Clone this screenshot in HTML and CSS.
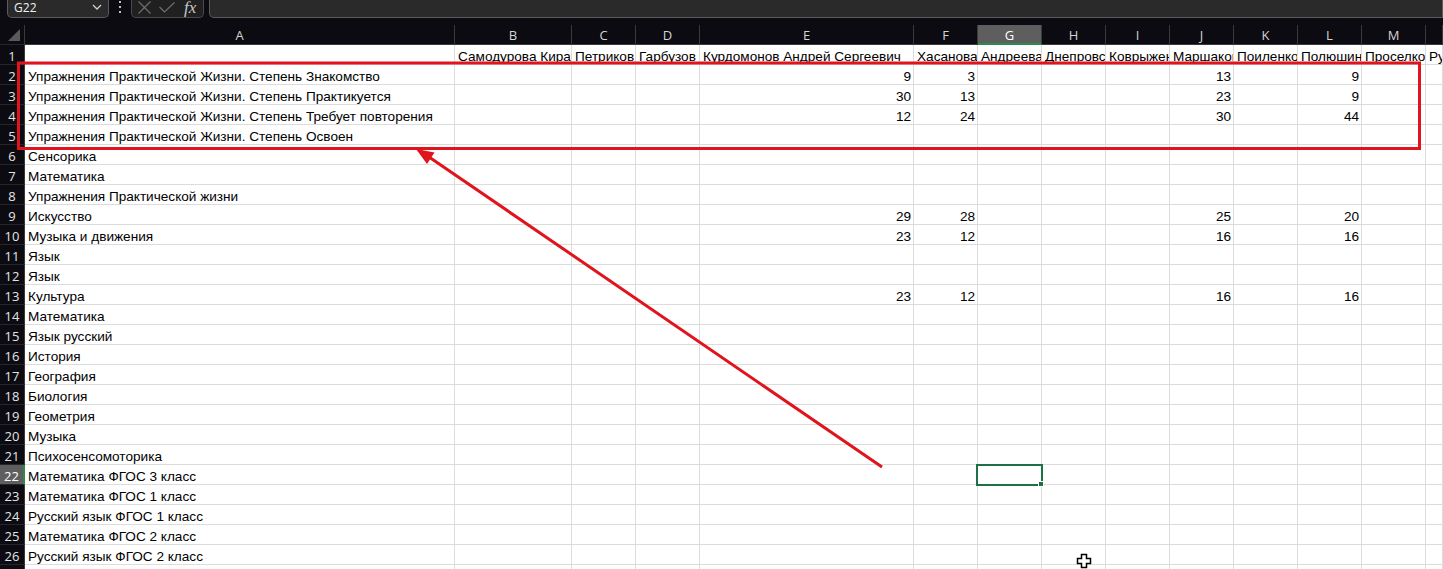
FILE: index.html
```html
<!DOCTYPE html>
<html lang="ru">
<head>
<meta charset="utf-8">
<title>Лист</title>
<link rel="stylesheet" href="styles.css">
</head>
<body>
<div class="app">
  <div class="topbar">
    <div class="namebox"><span class="ref">G22</span><svg class="chev" width="10" height="6" viewBox="0 0 10 6"><polyline points="1,1 5,5 9,1" fill="none" stroke="#d0d0d0" stroke-width="1.3"/></svg></div>
    <div class="dots"><i></i><i></i><i></i></div>
    <div class="fxbox">
      <svg class="ico-x" width="13" height="13" viewBox="0 0 13 13"><path d="M0.5 0.5 L12.5 12.5 M12.5 0.5 L0.5 12.5" stroke="#6e6e6e" stroke-width="1.2" fill="none"/></svg>
      <svg class="ico-ok" width="16" height="11" viewBox="0 0 16 11"><path d="M0.5 5 L5.5 10 L15.5 0.5" stroke="#6e6e6e" stroke-width="1.2" fill="none"/></svg>
      <span class="fx">fx</span>
    </div>
    <div class="formula"></div>
  </div>

  <div class="sheet">
    <div class="row hdr"><div class="h corner"><span class="tri"></span></div><div>A</div><div>B</div><div>C</div><div>D</div><div>E</div><div>F</div><div class="sel">G</div><div>H</div><div>I</div><div>J</div><div>K</div><div>L</div><div>M</div><div></div></div>
    <div class="row"><div class="h">1</div><i></i><i>Самодурова Кира</i><i>Петриков</i><i>Гарбузов</i><i>Курдомонов Андрей Сергеевич</i><i>Хасанова</i><i>Андреева</i><i>Днепровская</i><i>Коврыженко</i><i>Маршакова</i><i>Поиленко</i><i>Полюшина</i><i>Проселко</i><i>Руд</i></div>
    <div class="row"><div class="h">2</div><i>Упражнения Практической Жизни. Степень Знакомство</i><i></i><i></i><i></i><i class="n">9</i><i class="n">3</i><i></i><i></i><i></i><i class="n">13</i><i></i><i class="n">9</i><i></i><i></i></div>
    <div class="row"><div class="h">3</div><i>Упражнения Практической Жизни. Степень Практикуется</i><i></i><i></i><i></i><i class="n">30</i><i class="n">13</i><i></i><i></i><i></i><i class="n">23</i><i></i><i class="n">9</i><i></i><i></i></div>
    <div class="row"><div class="h">4</div><i>Упражнения Практической Жизни. Степень Требует повторения</i><i></i><i></i><i></i><i class="n">12</i><i class="n">24</i><i></i><i></i><i></i><i class="n">30</i><i></i><i class="n">44</i><i></i><i></i></div>
    <div class="row"><div class="h">5</div><i>Упражнения Практической Жизни. Степень Освоен</i><i></i><i></i><i></i><i></i><i></i><i></i><i></i><i></i><i></i><i></i><i></i><i></i><i></i></div>
    <div class="row"><div class="h">6</div><i>Сенсорика</i><i></i><i></i><i></i><i></i><i></i><i></i><i></i><i></i><i></i><i></i><i></i><i></i><i></i></div>
    <div class="row"><div class="h">7</div><i>Математика</i><i></i><i></i><i></i><i></i><i></i><i></i><i></i><i></i><i></i><i></i><i></i><i></i><i></i></div>
    <div class="row"><div class="h">8</div><i>Упражнения Практической жизни</i><i></i><i></i><i></i><i></i><i></i><i></i><i></i><i></i><i></i><i></i><i></i><i></i><i></i></div>
    <div class="row"><div class="h">9</div><i>Искусство</i><i></i><i></i><i></i><i class="n">29</i><i class="n">28</i><i></i><i></i><i></i><i class="n">25</i><i></i><i class="n">20</i><i></i><i></i></div>
    <div class="row"><div class="h">10</div><i>Музыка и движения</i><i></i><i></i><i></i><i class="n">23</i><i class="n">12</i><i></i><i></i><i></i><i class="n">16</i><i></i><i class="n">16</i><i></i><i></i></div>
    <div class="row"><div class="h">11</div><i>Язык</i><i></i><i></i><i></i><i></i><i></i><i></i><i></i><i></i><i></i><i></i><i></i><i></i><i></i></div>
    <div class="row"><div class="h">12</div><i>Язык</i><i></i><i></i><i></i><i></i><i></i><i></i><i></i><i></i><i></i><i></i><i></i><i></i><i></i></div>
    <div class="row"><div class="h">13</div><i>Культура</i><i></i><i></i><i></i><i class="n">23</i><i class="n">12</i><i></i><i></i><i></i><i class="n">16</i><i></i><i class="n">16</i><i></i><i></i></div>
    <div class="row"><div class="h">14</div><i>Математика</i><i></i><i></i><i></i><i></i><i></i><i></i><i></i><i></i><i></i><i></i><i></i><i></i><i></i></div>
    <div class="row"><div class="h">15</div><i>Язык русский</i><i></i><i></i><i></i><i></i><i></i><i></i><i></i><i></i><i></i><i></i><i></i><i></i><i></i></div>
    <div class="row"><div class="h">16</div><i>История</i><i></i><i></i><i></i><i></i><i></i><i></i><i></i><i></i><i></i><i></i><i></i><i></i><i></i></div>
    <div class="row"><div class="h">17</div><i>География</i><i></i><i></i><i></i><i></i><i></i><i></i><i></i><i></i><i></i><i></i><i></i><i></i><i></i></div>
    <div class="row"><div class="h">18</div><i>Биология</i><i></i><i></i><i></i><i></i><i></i><i></i><i></i><i></i><i></i><i></i><i></i><i></i><i></i></div>
    <div class="row"><div class="h">19</div><i>Геометрия</i><i></i><i></i><i></i><i></i><i></i><i></i><i></i><i></i><i></i><i></i><i></i><i></i><i></i></div>
    <div class="row"><div class="h">20</div><i>Музыка</i><i></i><i></i><i></i><i></i><i></i><i></i><i></i><i></i><i></i><i></i><i></i><i></i><i></i></div>
    <div class="row"><div class="h">21</div><i>Психосенсомоторика</i><i></i><i></i><i></i><i></i><i></i><i></i><i></i><i></i><i></i><i></i><i></i><i></i><i></i></div>
    <div class="row"><div class="h hsel">22</div><i>Математика ФГОС 3 класс</i><i></i><i></i><i></i><i></i><i></i><i></i><i></i><i></i><i></i><i></i><i></i><i></i><i></i></div>
    <div class="row"><div class="h">23</div><i>Математика ФГОС 1 класс</i><i></i><i></i><i></i><i></i><i></i><i></i><i></i><i></i><i></i><i></i><i></i><i></i><i></i></div>
    <div class="row"><div class="h">24</div><i>Русский язык ФГОС 1 класс</i><i></i><i></i><i></i><i></i><i></i><i></i><i></i><i></i><i></i><i></i><i></i><i></i><i></i></div>
    <div class="row"><div class="h">25</div><i>Математика ФГОС 2 класс</i><i></i><i></i><i></i><i></i><i></i><i></i><i></i><i></i><i></i><i></i><i></i><i></i><i></i></div>
    <div class="row"><div class="h">26</div><i>Русский язык ФГОС 2 класс</i><i></i><i></i><i></i><i></i><i></i><i></i><i></i><i></i><i></i><i></i><i></i><i></i><i></i></div>
    <div class="row"><div class="h">27</div><i></i><i></i><i></i><i></i><i></i><i></i><i></i><i></i><i></i><i></i><i></i><i></i><i></i><i></i></div>
  </div>

  <div class="selection"><span class="handle"></span></div>

  <svg class="annot" width="1443" height="569" viewBox="0 0 1443 569">
    <rect x="18.5" y="63" width="1401" height="85.5" fill="none" stroke="#e0141c" stroke-width="3"/>
    <line x1="882" y1="467" x2="429" y2="157" stroke="#e0141c" stroke-width="3"/>
    <polygon points="416,149 434.5,152.5 427,164" fill="#e0141c"/>
  </svg>

  <svg class="cursor" width="16" height="16" viewBox="0 0 16 16"><path d="M5.5 1.5 H10.5 V5.5 H14.5 V10.5 H10.5 V14.5 H5.5 V10.5 H1.5 V5.5 H5.5 Z" fill="#fff" stroke="#000" stroke-width="1.5"/></svg>
</div>
</body>
</html>
```

FILE: styles.css
```css
* { box-sizing: border-box; }
html, body { margin: 0; padding: 0; }
body {
  width: 1443px;
  height: 569px;
  overflow: hidden;
  background: #0c0b12;
  font-family: "Liberation Sans", Arial, sans-serif;
}
.app { position: relative; width: 1443px; height: 569px; overflow: hidden; }

/* top formula bar */
.topbar {
  height: 25px;
  display: flex;
  align-items: flex-start;
  padding-left: 7px;
  color: #e8e8e8;
  font-family: "Open Sans", "Liberation Sans", sans-serif;
}
.namebox {
  width: 102px;
  height: 19px;
  margin-top: -1px;
  background: #2a2a2a;
  border: 1px solid #5a5a5a;
  border-top: none;
  border-radius: 0 0 5px 5px;
  display: flex;
  align-items: center;
  justify-content: space-between;
  padding: 0 6px 2px 6px;
}
.ref { font-size: 12px; color: #f0f0f0; letter-spacing: 0.1px; line-height: 17px; padding-top: 1px; }
.dots {
  width: 22px;
  height: 13px;
  display: flex;
  flex-direction: column;
  align-items: center;
  justify-content: space-between;
  padding-top: 1px;
}
.dots i { display: block; width: 2px; height: 2px; background: #c0c0c0; }
.fxbox {
  width: 73px;
  height: 19px;
  margin-top: -1px;
  background: #202020;
  border: 1px solid #4a4a4a;
  border-top: none;
  border-radius: 0 0 5px 5px;
  display: flex;
  align-items: center;
  padding: 0 0 2px 6px;
}
.ico-x { flex: none; }
.ico-ok { flex: none; margin-left: 8px; }
.fx {
  font-family: "Liberation Serif", "DejaVu Serif", serif;
  font-style: italic;
  font-size: 17px;
  line-height: 17px;
  color: #c8c8c8;
  margin-left: 9px;
  padding-right: 2px;
}
.formula {
  flex: 1;
  height: 19px;
  margin-top: -1px;
  margin-left: 5px;
  background: #2a2a2a;
  border: 1px solid #5a5a5a;
  border-top: none;
  border-radius: 0 0 0 5px;
}

/* sheet */
.sheet { background: #ffffff; }
.row {
  display: grid;
  grid-template-columns: 25px 430px 117px 64px 64px 214px 64px 64px 64px 64px 64px 64px 64px 64px 1fr;
  height: 20px;
}
.row > * {
  display: block;
  height: 20px;
  border-right: 1px solid #dcdcdc;
  border-bottom: 1px solid #dcdcdc;
  overflow: hidden;
  white-space: nowrap;
  font-style: normal;
  font-size: 13.6px;
  line-height: 17px;
  color: #000;
  padding: 3px 2px 0 3px;
}
.row > .n { text-align: right; padding-right: 2px; }

.row > .h {
  background: #0c0b12;
  color: #e4e4e4;
  text-align: center;
  padding: 2px 0 0 0;
  border-right: 1px solid #3a3a3a;
  border-bottom: 1px solid #26252c;
  font-family: "Open Sans", "Liberation Sans", sans-serif;
  font-size: 13px;
  line-height: 18px;
}
.row > .hsel {
  background: #5e5e5e;
  color: #ffffff;
  border-right: 2px solid #2c8a4f;
}

.hdr > * {
  background: #0c0b12;
  color: #d4d4d4;
  text-align: center;
  padding: 1px 0 0 0;
  border-right: 1px solid #3a3a3a;
  border-bottom: 1px solid #3a3a3a;
  font-family: "Open Sans", "Liberation Sans", sans-serif;
  font-size: 13px;
  line-height: 19px;
}
.hdr > .sel {
  background: #5e5e5e;
  color: #ffffff;
  border-bottom: 2px solid #2c8a4f;
}
.corner { position: relative; }
.tri {
  position: absolute;
  right: 4px;
  bottom: 3px;
  width: 0;
  height: 0;
  border-left: 12px solid transparent;
  border-bottom: 12px solid #5a5a5a;
}

/* overlays */
.selection {
  position: absolute;
  left: 976px;
  top: 464px;
  width: 67px;
  height: 22px;
  border: 2px solid #1e7145;
}
.handle {
  position: absolute;
  right: -3px;
  bottom: -3px;
  width: 6px;
  height: 6px;
  background: #1e7145;
  border: 1px solid #ffffff;
}
.annot { position: absolute; left: 0; top: 0; pointer-events: none; }
.cursor { position: absolute; left: 1076px; top: 553px; }
```
